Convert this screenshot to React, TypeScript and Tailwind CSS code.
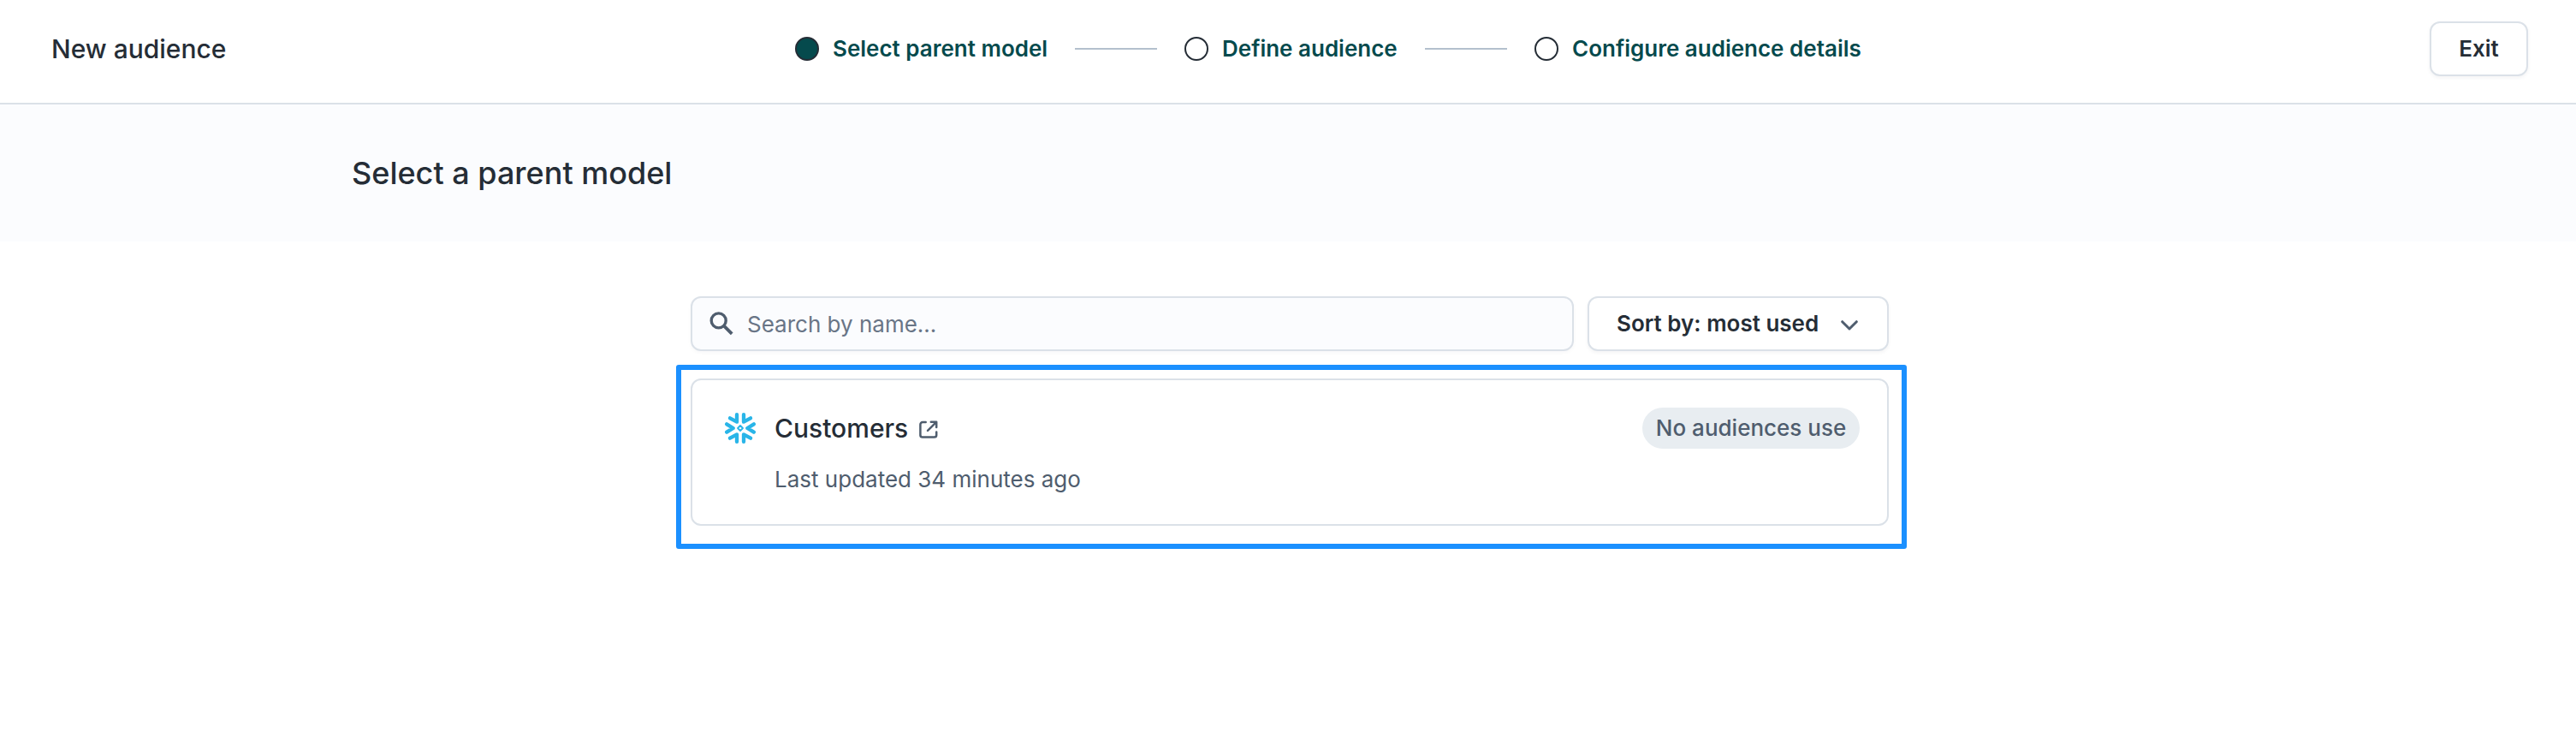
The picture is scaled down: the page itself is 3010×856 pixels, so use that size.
type Step = { label: string; active?: boolean; width: string };

const steps: Step[] = [
  { label: 'Select parent model', active: true, width: 'w-[251px]' },
  { label: 'Define audience', width: 'w-[205px]' },
  { label: 'Configure audience details', width: 'w-[340px]' },
];

function SearchIcon() {
  return (
    <svg className="size-[30px] shrink-0" viewBox="0 0 30 30" fill="none" stroke="#4f5d6e" strokeWidth="3.4">
      <circle cx="10.7" cy="11.4" r="8.5" />
      <path d="M16.7 17.4 26.2 26.9" strokeWidth="3.8" />
    </svg>
  );
}

function ChevronIcon() {
  return (
    <svg className="h-3 w-5" viewBox="0 0 20 12" fill="none" stroke="#4f5d6e" strokeWidth="3" strokeLinecap="round" strokeLinejoin="round">
      <path d="M1.7 1.7 10 10 18.3 1.7" />
    </svg>
  );
}

function ExternalIcon() {
  return (
    <svg className="size-[22px]" viewBox="0 0 22 22" fill="none" stroke="#4f5d6e" strokeWidth="2.5" strokeLinecap="round" strokeLinejoin="round">
      <path d="M7.7 2.1H4A2.6 2.6 0 0 0 1.4 4.7V17A2.6 2.6 0 0 0 4 19.6H17.6A2.6 2.6 0 0 0 20.2 17V13.6" />
      <path d="M13.8 1.8H20.2V8" />
      <path d="M10 11.8 19.6 2.4" />
    </svg>
  );
}

function SnowflakeIcon() {
  return (
    <svg className="size-9" viewBox="-54 -54 108 108" fill="none" stroke="#29b5e8" strokeWidth="13" strokeLinecap="round" strokeLinejoin="round">
      <path d="M-47.5-14-25 0-47.5 14M47.5-14 25 0 47.5 14" />
      <path d="M-12-47.5V-22L-36-35M12-47.5V-22L36-35" />
      <path d="M-12 47.5V22L-36 35M12 47.5V22L36 35" />
      <path d="M0-9 9 0 0 9-9 0Z" strokeWidth="5.5" />
    </svg>
  );
}

export default function App() {
  return (
    <div className="h-[856px] w-full overflow-hidden bg-white font-['Inter',sans-serif] text-[26px] text-[#252d36]">
      <header className="flex h-[122px] items-center justify-between border-b-2 border-[#dbe1e8] pr-14 pb-[6px] pl-[60px]">
        <h1 className="w-[869px] text-[30px] leading-9 font-medium">New audience</h1>
        <ol className="mr-auto flex items-center font-semibold text-[#054a4d]">
          {steps.map((s, i) => (
            <li key={s.label} className="flex items-center">
              {i > 0 && <span className="mr-8 ml-8 h-0.5 w-24 bg-[#b3c0cd]" />}
              <span className={`size-7 rounded-full border-2 border-[#252d36] ${s.active ? 'bg-[#054a4d]' : 'bg-white'}`} />
              <span className={`ml-4 leading-8 whitespace-nowrap ${s.width}`}>{s.label}</span>
            </li>
          ))}
        </ol>
        <button className="h-16 w-[115px] rounded-xl border-2 border-[#dbe1e8] bg-white pb-0.5 font-semibold shadow-[0_2px_4px_rgba(37,45,54,0.05)]">Exit</button>
      </header>

      <section className="flex h-40 items-center bg-[#fbfcfe] pl-[411px]">
        <h2 className="text-[36px] leading-10 font-medium">Select a parent model</h2>
      </section>

      <main className="ml-[790px] w-[1438px] pt-16">
        <div className="flex gap-4 pr-[21px] pl-[17px]">
          <label className="flex h-16 flex-1 items-center rounded-xl border-2 border-[#dbe1e8] bg-[#fbfcfe] pl-5 shadow-[0_2px_4px_rgba(37,45,54,0.03)]">
            <SearchIcon />
            <input
              className="ml-3.5 w-[800px] bg-transparent pt-0.5 leading-8 outline-none placeholder:text-[#697586] placeholder:opacity-100"
              placeholder="Search by name..."
            />
          </label>
          <button className="flex h-16 w-[352px] items-center justify-between rounded-xl border-2 border-[#dbe1e8] bg-white pr-[34px] pb-0.5 pl-8 font-semibold shadow-[0_2px_4px_rgba(37,45,54,0.05)]">
            Sort by: most used
            <span className="pt-1.5">
              <ChevronIcon />
            </span>
          </button>
        </div>

        <div className="mt-4 h-[215px] rounded-[3px] border-6 border-[#1b90ff] pt-2.5 pr-[15px] pl-[11px]">
          <article className="flex h-[172px] items-start rounded-xl border-2 border-[#dbe1e8] bg-white pt-8 pr-8 pl-[38px]">
            <div className="pt-1.5">
              <SnowflakeIcon />
            </div>
            <div className="ml-[22px] flex-1">
              <div className="flex h-12 items-center gap-[13px]">
                <h3 className="text-[30px] leading-9 font-medium">Customers</h3>
                <span className="pt-1">
                  <ExternalIcon />
                </span>
              </div>
              <p className="mt-5 leading-8 text-[#4f5d6e]">Last updated 34 minutes ago</p>
            </div>
            <span className="flex h-12 w-[254px] items-center justify-center rounded-full bg-[#e8edf1] pb-0.5 font-medium whitespace-nowrap text-[#4f5d6e]">
              No audiences use
            </span>
          </article>
        </div>
      </main>
    </div>
  );
}
